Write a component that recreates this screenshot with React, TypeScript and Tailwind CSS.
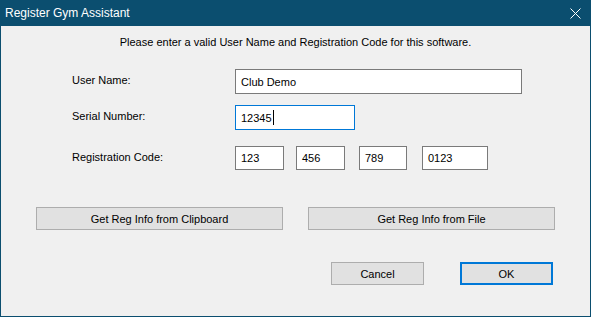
import React from "react";

const font = { fontFamily: '"Liberation Sans", Arial, sans-serif' };

// one labelled row of the dialog
function Row({ label, children, className }: { label: string; children: React.ReactNode; className?: string }) {
  return (
    <div className={"flex items-start " + (className ?? "")}>
      <div className="w-[234px] shrink-0 pl-[71px] pt-[3px] text-[11px] leading-[16px] text-black whitespace-nowrap">{label}</div>
      <div className="flex">{children}</div>
    </div>
  );
}

function Field({ value, w, focused, h = "h-[25px]" }: { value: string; w: string; focused?: boolean; h?: string }) {
  return (
    <div
      className={
        "bg-white border flex items-center pl-[5px] text-[11px] leading-[16px] text-black " +
        w + " " + h + " " +
        (focused ? "border-[#0078d7]" : "border-[#7a7a7a]")
      }
    >
      {value}
      {focused && <span className="inline-block w-px h-[15px] bg-black ml-[1px]" />}
    </div>
  );
}

function Button({ label, w, primary }: { label: string; w: string; primary?: boolean }) {
  return (
    <button
      className={
        "h-[23px] bg-[#e1e1e1] text-[11px] leading-[16px] text-black flex items-center justify-center " +
        w + " " +
        (primary ? "border-2 border-[#0078d7]" : "border border-[#adadad]")
      }
    >
      {label}
    </button>
  );
}

export default function App() {
  return (
    <div className="w-[591px] h-[317px] flex flex-col bg-[#f0f0f0] border-x border-b border-[#0b4e6f]" style={font}>
      {/* title bar */}
      <div className="h-[26px] -mx-px bg-[#0b4e6f] flex items-center justify-between pl-[5px] pr-[10px]">
        <span className="text-white text-[12px] leading-[16px]">Register Gym Assistant</span>
        <svg width="11" height="11" viewBox="0 0 11 11">
          <path d="M0.5 0.5 L10.5 10.5 M10.5 0.5 L0.5 10.5" stroke="white" strokeWidth="1" />
        </svg>
      </div>

      <div className="mt-[8px] text-center text-[11px] leading-[16px] text-black">
        Please enter a valid User Name and Registration Code for this software.
      </div>

      <Row label="User Name:" className="mt-[19px]">
        <Field value="Club Demo" w="w-[287px]" />
      </Row>
      <Row label="Serial Number:" className="mt-[11px]">
        <Field value="12345" w="w-[120px]" focused />
      </Row>
      <Row label="Registration Code:" className="mt-[16px]">
        <div className="flex">
          <Field value="123" w="w-[49px]" h="h-[24px]" />
          <div className="ml-[12px]">
            <Field value="456" w="w-[49px]" h="h-[24px]" />
          </div>
          <div className="ml-[14px]">
            <Field value="789" w="w-[48px]" h="h-[24px]" />
          </div>
          <div className="ml-[15px]">
            <Field value="0123" w="w-[66px]" h="h-[24px]" />
          </div>
        </div>
      </Row>

      <div className="mt-[37px] flex pl-[35px] gap-[25px]">
        <Button label="Get Reg Info from Clipboard" w="w-[247px]" />
        <Button label="Get Reg Info from File" w="w-[247px]" />
      </div>

      <div className="mt-[32px] flex pl-[330px] gap-[36px]">
        <Button label="Cancel" w="w-[93px]" />
        <Button label="OK" w="w-[93px]" primary />
      </div>
    </div>
  );
}
